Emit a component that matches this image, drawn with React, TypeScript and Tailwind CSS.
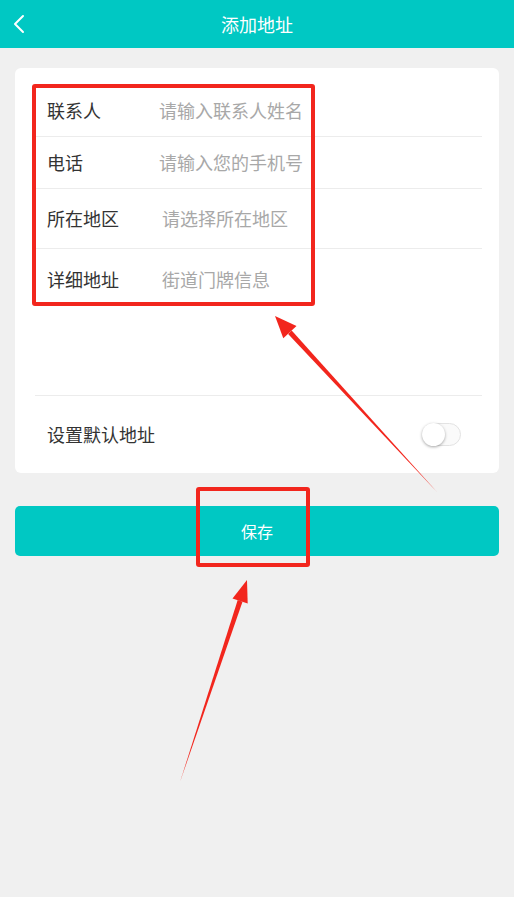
import React from "react";

const font = { fontFamily: '"Noto Sans CJK SC", "Noto Sans", sans-serif' };

function Row({ label, placeholder, lw, h, divider = true, align = "center", pt = 0 }: { label: string; placeholder: string; lw: string; h: string; divider?: boolean; align?: string; pt?: number }) {
  return (
    <div className={`${h} flex ${align === "center" ? "items-center" : "items-start"} ${divider ? "border-b border-[#ececec]" : ""}`}>
      <div className={`${lw} pl-3 text-[18px] text-[#333]`} style={pt ? { paddingTop: pt } : undefined}>{label}</div>
      <div className="text-[18px] text-[#a8a8a8]" style={pt ? { paddingTop: pt } : undefined}>{placeholder}</div>
    </div>
  );
}

export default function App() {
  return (
    <div className="relative min-h-[897px] w-[514px] bg-[#f0f0f0]" style={font}>
      <div className="relative flex h-[48px] items-center justify-center bg-[#00c8c3]">
        <svg className="absolute left-[12px] top-[14px]" width="14" height="20" viewBox="0 0 14 20">
          <path d="M11 2 L3 10 L11 18" fill="none" stroke="white" strokeWidth="2" strokeLinecap="round" strokeLinejoin="round" />
        </svg>
        <span className="text-[18px] text-white">添加地址</span>
      </div>

      <div className="mx-[15px] mt-[20px] rounded-[6px] bg-white pl-[20px] pr-[17px] pt-[17px]">
        <Row label="联系人" placeholder="请输入联系人姓名" lw="w-[124px]" h="h-[52px]" />
        <Row label="电话" placeholder="请输入您的手机号" lw="w-[124px]" h="h-[52px]" />
        <Row label="所在地区" placeholder="请选择所在地区" lw="w-[127px]" h="h-[60px]" />
        <Row label="详细地址" placeholder="街道门牌信息" lw="w-[127px]" h="h-[147px]" align="start" pt={17} />
        <div className="flex h-[77px] items-center justify-between">
          <div className="pl-3 text-[18px] text-[#333]">设置默认地址</div>
          <div className="relative mr-[21px] h-[23px] w-[39px] rounded-full border border-[#e3e3e3] bg-[#fafafa]">
            <div className="absolute left-[-1px] top-[-1px] h-[23px] w-[23px] rounded-full bg-white shadow-[0_1px_3px_rgba(0,0,0,0.35)]" />
          </div>
        </div>
      </div>

      <div className="mx-[15px] mt-[33px] flex h-[50px] items-center justify-center rounded-[5px] bg-[#00c8c3]">
        <span className="text-[16px] text-white">保存</span>
      </div>

      {/* annotations */}
      <div className="pointer-events-none absolute left-[32px] top-[84px] h-[222px] w-[283px] rounded-[3px] border-[4px] border-[#f2261d]" />
      <div className="pointer-events-none absolute left-[196px] top-[487px] h-[80px] w-[114px] rounded-[3px] border-[4px] border-[#f2261d]" />
      <svg className="pointer-events-none absolute left-0 top-0" width="514" height="897" viewBox="0 0 514 897">
        <polygon points="437,492 291.7,330.5 288.1,333.9" fill="#f2261d" />
        <polygon points="275,316 296.5,326.1 283.3,338.3" fill="#f2261d" />
        <polygon points="180,782 242.5,601.7 237.7,600.1" fill="#f2261d" />
        <polygon points="247,580 247.7,603.4 232.5,598.4" fill="#f2261d" />
      </svg>
    </div>
  );
}
